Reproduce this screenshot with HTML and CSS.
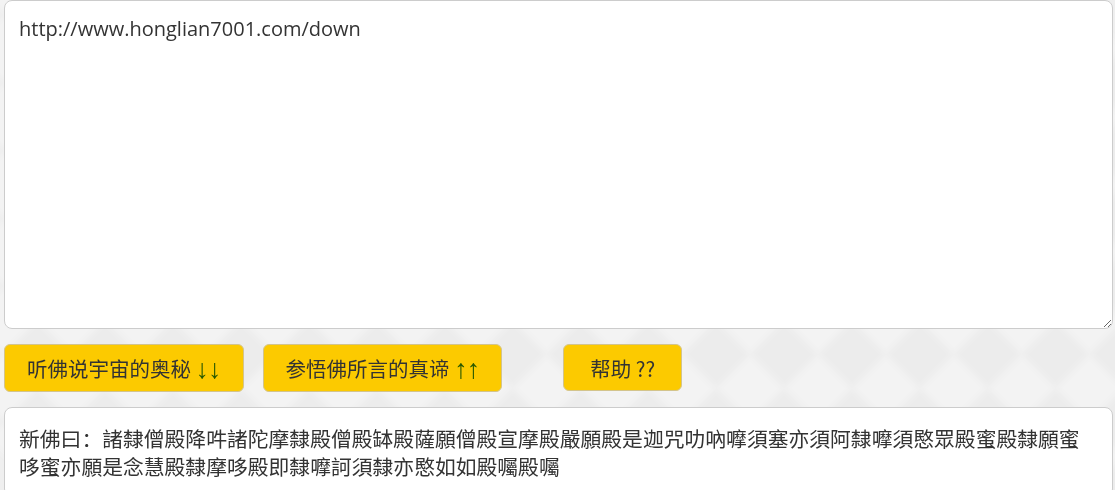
FILE: index.html
```html
<!DOCTYPE html>
<html lang="zh">
<head>
<meta charset="utf-8">
<title>与佛论禅</title>
<link rel="stylesheet" href="styles.css">
</head>
<body>
<div class="page">
  <textarea class="input">http://www.honglian7001.com/down</textarea>
  <div class="actions">
    <button class="btn">听佛说宇宙的奥秘 <span class="arrows">↓↓</span></button>
    <button class="btn btn-wide-gap">参悟佛所言的真谛 <span class="arrows">↑↑</span></button>
    <button class="btn btn-help">帮助 ??</button>
  </div>
  <div class="output">新佛曰：諸隸僧殿降吽諸陀摩隸殿僧殿缽殿薩願僧殿宣摩殿嚴願殿是迦咒叻吶嚤須塞亦須阿隸嚤須愍眾殿蜜殿隸願蜜哆蜜亦願是念慧殿隸摩哆殿即隸嚤訶須隸亦愍如如殿囑殿囑</div>
</div>
</body>
</html>
```
FILE: styles.css
```css
html, body {
  margin: 0;
  padding: 0;
  height: 100%;
  overflow: hidden;
}
body {
  background: #efefef;
  font-family: "Open Sans", "Noto Sans CJK SC", sans-serif;
  color: #333;
  position: relative;
}
body::before {
  content: "";
  position: fixed;
  left: -60%;
  top: -60%;
  width: 220%;
  height: 220%;
  transform: rotate(45deg);
  background: repeating-conic-gradient(#ececec 0 25%, #f3f3f3 0 50%) 0 0 / 96px 96px;
  filter: blur(3px);
  z-index: -1;
}
.page {
  padding: 0 2px 0 4px;
  display: flex;
  flex-direction: column;
}
.input {
  display: block;
  box-sizing: border-box;
  width: 100%;
  height: 329px;
  margin: 0;
  padding: 14px 14px;
  border: 1px solid #ccc;
  border-radius: 8px;
  background: #fff;
  font-family: "Open Sans", "Noto Sans CJK SC", sans-serif;
  font-size: 20px;
  line-height: 28px;
  color: #333;
  resize: vertical;
  outline: none;
}
.actions {
  display: flex;
  align-items: flex-start;
  margin-top: 15px;
}
.btn {
  box-sizing: border-box;
  height: 48px;
  padding: 0 22px;
  margin: 0 19px 0 0;
  border: 1px solid #d3c48c;
  border-radius: 6px;
  background: #fcca00;
  color: #333;
  font-family: "Noto Sans CJK SC", sans-serif;
  font-size: 20.5px;
  white-space: nowrap;
  cursor: pointer;
}
.arrows {
  font-family: "Liberation Sans", sans-serif;
  font-size: 27px;
  line-height: 1;
  letter-spacing: -1px;
  color: #2a5a00;
  vertical-align: -1px;
}
.btn-wide-gap {
  margin-right: 61px;
}
.btn-help {
  width: 119px;
  height: 47px;
  padding: 0;
}
.output {
  margin-top: 15px;
  box-sizing: border-box;
  min-height: 84px;
  padding: 16px 14px;
  border: 1px solid #ccc;
  border-radius: 8px;
  background: #fff;
  font-family: "Noto Sans CJK SC", sans-serif;
  font-size: 20.8px;
  line-height: 28px;
  color: #333;
  word-break: break-all;
}
```
